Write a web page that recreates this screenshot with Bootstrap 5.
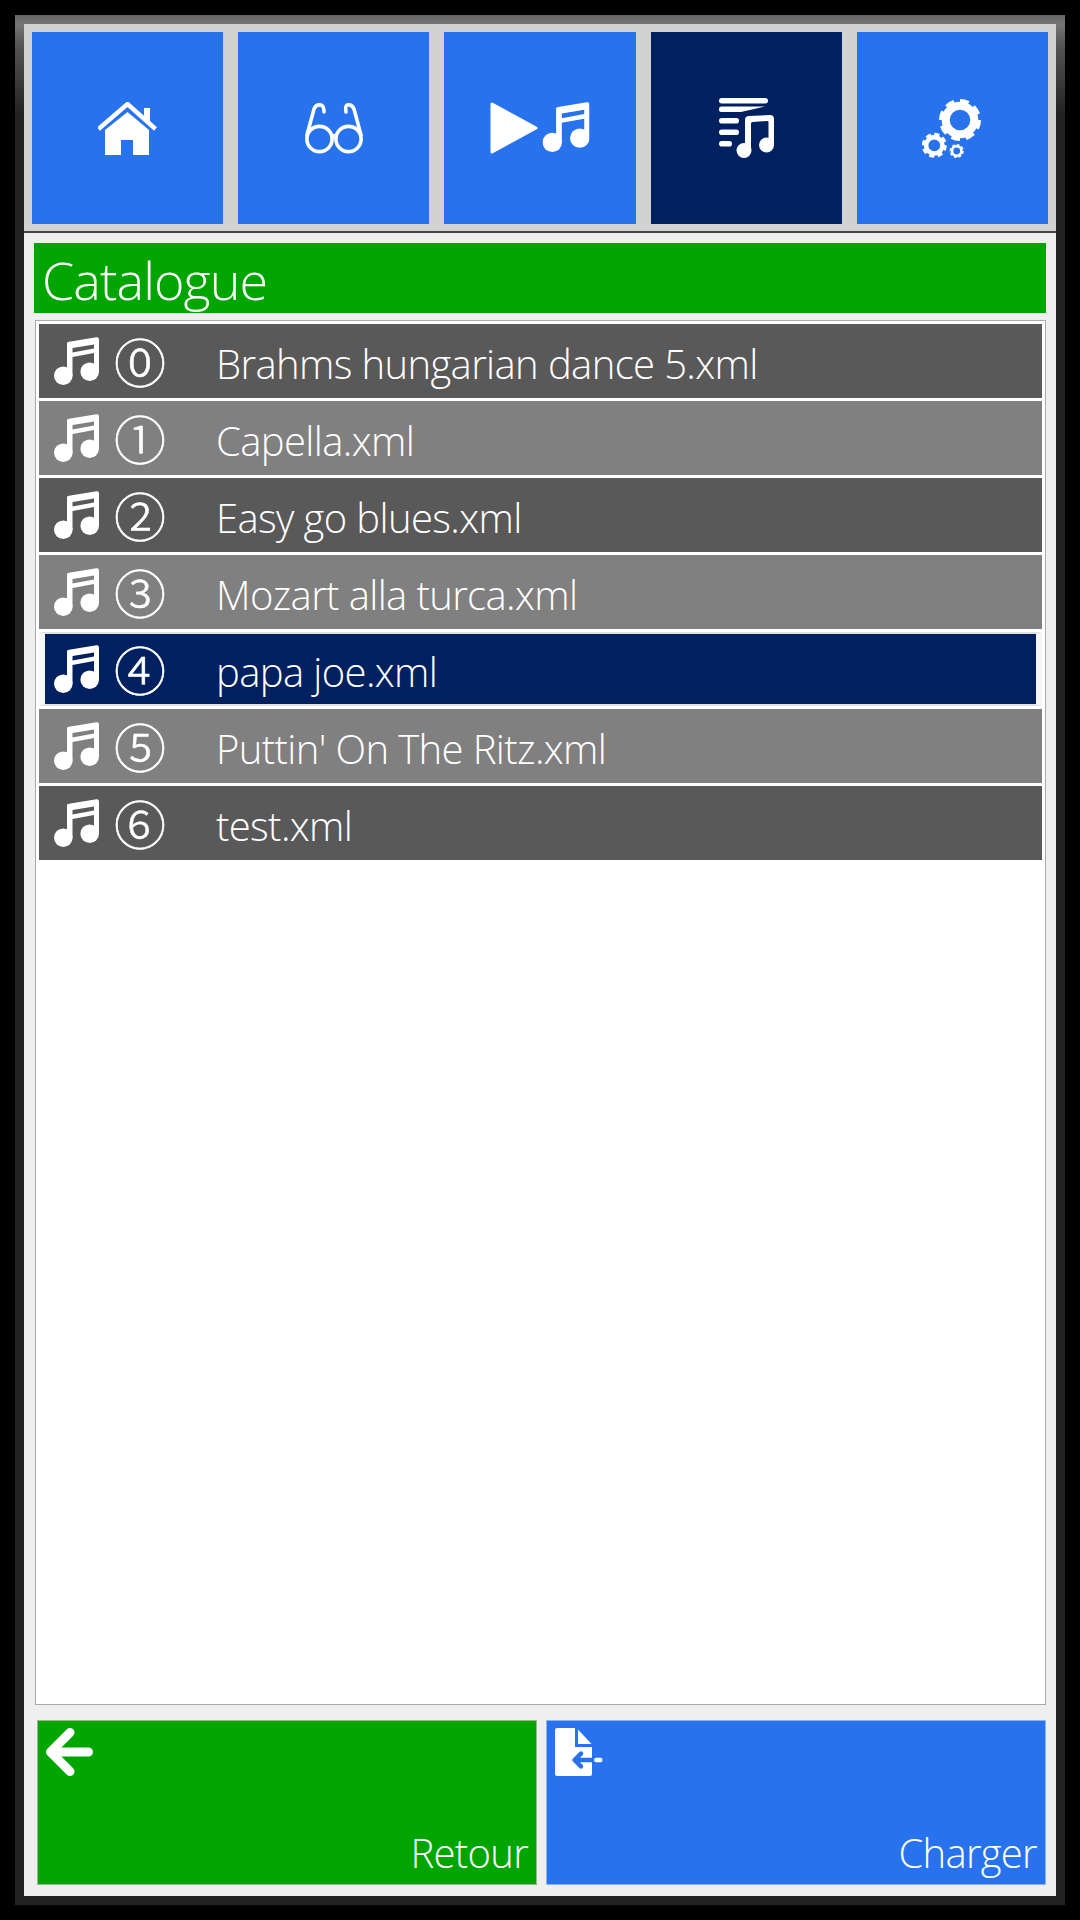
<!DOCTYPE html>
<html lang="fr"><head><meta charset="utf-8"><title>Catalogue</title>
<link href="https://cdn.jsdelivr.net/npm/bootstrap@5.3.0/dist/css/bootstrap.min.css" rel="stylesheet">
<style>
:root{--ui-blue:#2872ee;--ui-green:#00a500;--ui-navy:#002060;}
html,body{height:100%;}
body{background:#000;font-family:"Open Sans","Liberation Sans",sans-serif;font-weight:300;color:#fff;}
.frame{width:1050px;height:1890px;margin:15px;padding:9px;background:linear-gradient(#666,#767676 9px,#555 30px,#222 100px,#222);}
.inner{background:#efefef;height:100%;}
.topbar{background:#d2d2d2;height:209px;padding:8px 8px 0;border-bottom:2px solid #444;gap:15px;}
.tile{width:192px;height:192px;border-radius:0;border:0;background:var(--ui-blue);padding:0;}
.tile.active-tile{background:var(--ui-navy);}
.tile:hover,.tile:focus{background:var(--ui-blue);}
.tile.active-tile:hover{background:var(--ui-navy);}
.tile svg,.foot-btn svg,.row-item svg{filter:blur(.5px);flex:none;}
.panel-body{padding:10px 10px 11px 10px;gap:7px;min-height:0;}
.title-bar{height:70px;background:var(--ui-green);font-size:52px;letter-spacing:-.9px;line-height:74px;padding-left:8px;color:#fff;}
.list-box{height:1385px;margin-left:1px;background:#fff;border:1px solid #aaa;padding:3px;gap:3px;flex:none;border-radius:0;}
.row-item{height:74px;flex:none;background:#595959;color:#fff;border:0;border-radius:0;padding:0 0 0 15px;font-size:40px;letter-spacing:-.62px;}
.row-item.alt-row{background:#808080;}
.list-group-item.sel-row{background:var(--ui-navy);background-clip:padding-box;border-style:solid;border-width:2px 6px;border-color:#e2e2e2 #f7f7f7;padding-left:9px;}
.row-num{font-family:"Noto Sans CJK JP","DejaVu Sans",sans-serif;font-weight:300;font-size:52px;width:82px;line-height:1;text-align:center;letter-spacing:0;-webkit-text-stroke:.6px #fff;}
.row-label{margin-left:35px;padding-top:6px;}
.foot{gap:9px;margin-top:8px;margin-left:3px;}
.foot-btn{flex:1;height:165px;border-radius:0;border:1px solid #8fbf8f;font-size:40px;letter-spacing:-.7px;font-weight:300;background:var(--ui-green);color:#fff;padding:7px 8px 11px;line-height:1;}
.foot-btn:hover,.foot-btn:focus{background:var(--ui-green);color:#fff;}
.foot-btn.blue,.foot-btn.blue:hover,.foot-btn.blue:focus{background:var(--ui-blue);border-color:#8db4f2;}
</style></head><body>
<svg width="0" height="0" class="position-absolute"><defs>
<symbol id="note" viewBox="0 0 45 48"><path fill="#fff" fill-rule="evenodd" d="M13 6Q13 5 15 4.7L42.5.3Q45 0 45 2.5V35H40V16L18.5 20V39H13ZM18.5 11 40 7.5V11.5L18.5 15.5Z"/><circle cx="9.3" cy="38.7" r="9.3" fill="#fff"/><circle cx="35.7" cy="34.7" r="9.3" fill="#fff"/></symbol>
</defs></svg>
<div class="frame"><div class="inner d-flex flex-column">
<nav class="topbar d-flex">
<button class="btn tile d-flex align-items-center justify-content-center" type="button"><svg width="60" height="53" viewBox="1 0 60 53"><path d="M1.5 27 30.5 2 58.5 27" fill="none" stroke="#fff" stroke-width="4.4"/><path fill="#fff" d="M47 6h6v14h-6zM8 28 30.5 10 52 28V53H36V38H24V53H8Z"/></svg></button>
<button class="btn tile d-flex align-items-center justify-content-center" type="button"><svg width="58" height="51" viewBox="0 0 58 51" fill="none" stroke="#fff" stroke-width="3.6" stroke-linecap="round"><circle cx="14.5" cy="36" r="12.6"/><circle cx="43.5" cy="36" r="12.6"/><path d="M27 34Q29 31 31 34M2 32 9 6Q11 1 16 2 19 3 19 9M56 32 49 6Q47 1 42 2 40 3 41 9"/></svg></button>
<button class="btn tile d-flex align-items-center justify-content-center" type="button"><svg width="100" height="52" viewBox="0 0 100 52"><path fill="#fff" stroke="#fff" stroke-width="3" stroke-linejoin="round" d="M2 2V50L46 26Z"/><use href="#note" x="52.5" y="0" width="47" height="50"/></svg></button>
<button class="btn tile active-tile d-flex align-items-center justify-content-center" type="button"><svg width="55" height="60" viewBox="0 0 55 60" fill="#fff"><rect y="0" width="49" height="5.4" rx="2.7"/><path d="M2.7 8.4 46 8.6 22 14H2.7A2.7 2.7 0 0 1 2.7 8.4Z"/><rect y="20" width="20" height="5.6" rx="2.8"/><rect y="31.5" width="20" height="5.6" rx="2.8"/><rect y="43" width="13" height="5.6" rx="2.8"/><path d="M26 53V22Q26 18 30 18L51 17Q55 17 55 21V47H49.5V24Q49.5 23 48 23L33.5 24Q32 24 32 25.5V53Z"/><circle cx="25" cy="52.5" r="7.5"/><circle cx="47.5" cy="47" r="7.5"/></svg></button>
<button class="btn tile d-flex align-items-center justify-content-center" type="button"><svg width="60" height="59" viewBox="0 0 60 59" fill="none" stroke="#fff"><circle cx="38" cy="21" r="14.3" stroke-width="8"/><circle cx="38" cy="21" r="19" stroke-width="4" pathLength="8" stroke-dasharray=".6 .4"/><circle cx="12.3" cy="46.3" r="8.2" stroke-width="4.6"/><circle cx="12.3" cy="46.3" r="11" stroke-width="3" pathLength="8" stroke-dasharray=".6 .4"/><circle cx="34.7" cy="52" r="4.7" stroke-width="2.6"/><circle cx="34.7" cy="52" r="6.3" stroke-width="1.6" pathLength="8" stroke-dasharray=".6 .4"/></svg></button>
</nav>
<main class="panel-body d-flex flex-column flex-grow-1">
<div class="title-bar">Catalogue</div>
<div class="list-group list-box d-flex flex-column">
<div class="list-group-item row-item d-flex align-items-center"><svg width="45" height="48"><use href="#note"/></svg><span class="row-num">⓪</span><span class="row-label">Brahms hungarian dance 5.xml</span></div>
<div class="list-group-item row-item alt-row d-flex align-items-center"><svg width="45" height="48"><use href="#note"/></svg><span class="row-num">①</span><span class="row-label">Capella.xml</span></div>
<div class="list-group-item row-item d-flex align-items-center"><svg width="45" height="48"><use href="#note"/></svg><span class="row-num">②</span><span class="row-label">Easy go blues.xml</span></div>
<div class="list-group-item row-item alt-row d-flex align-items-center"><svg width="45" height="48"><use href="#note"/></svg><span class="row-num">③</span><span class="row-label">Mozart alla turca.xml</span></div>
<div class="list-group-item row-item sel-row d-flex align-items-center"><svg width="45" height="48"><use href="#note"/></svg><span class="row-num">④</span><span class="row-label">papa joe.xml</span></div>
<div class="list-group-item row-item alt-row d-flex align-items-center"><svg width="45" height="48"><use href="#note"/></svg><span class="row-num">⑤</span><span class="row-label">Puttin' On The Ritz.xml</span></div>
<div class="list-group-item row-item d-flex align-items-center"><svg width="45" height="48"><use href="#note"/></svg><span class="row-num">⑥</span><span class="row-label">test.xml</span></div>
</div>
<div class="foot d-flex">
<button class="btn foot-btn d-flex flex-column justify-content-between" type="button"><svg width="47" height="48" viewBox="0 0 47 48" fill="none" stroke="#fff" stroke-width="9" stroke-linecap="round" stroke-linejoin="round"><path d="M24 4.5 4.5 24 24 43.5M5 24H42.5"/></svg><span class="align-self-end">Retour</span></button>
<button class="btn foot-btn blue d-flex flex-column justify-content-between" type="button"><svg width="48" height="48" viewBox="0 0 48 48"><path fill="#fff" d="M2 0H20V19H37V46a2 2 0 0 1-2 2H2a2 2 0 0 1-2-2V2a2 2 0 0 1 2-2Z"/><path fill="#fff" d="M23 1.5 36.5 16H23Z"/><path d="M26 25.6 19.5 32 26 38.4M21 32H38" fill="none" stroke="#2872ee" stroke-width="4.5" stroke-linecap="round" stroke-linejoin="round"/><rect x="39" y="29.8" width="8.5" height="4.4" rx="2.2" fill="#fff"/></svg><span class="align-self-end">Charger</span></button>
</div>
</main>
</div></div>
</body></html>
